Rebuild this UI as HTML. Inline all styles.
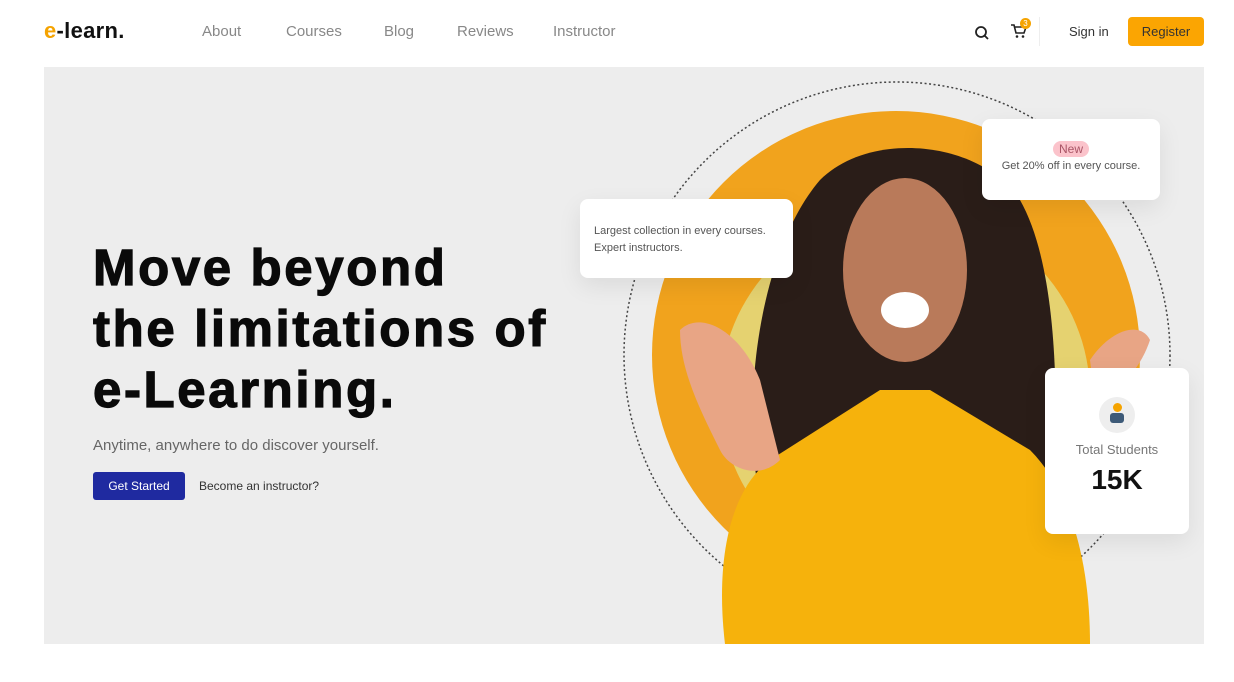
<!DOCTYPE html>
<html><head><meta charset="utf-8"><style>
*{margin:0;padding:0;box-sizing:border-box}
body{width:1234px;height:682px;background:#fff;font-family:"Liberation Sans",sans-serif;position:relative;overflow:hidden}
.a{position:absolute}
.nav{font-size:15px;color:#888;top:23px}
.hero{left:44px;top:67px;width:1160px;height:577px;background:#ededed;overflow:hidden}
h1{position:absolute;left:49px;top:170px;font-size:51px;line-height:61px;font-weight:900;color:#0a0a0a;letter-spacing:2.6px;-webkit-text-stroke:1.2px #0a0a0a}
.card{background:#fff;border-radius:8px;box-shadow:0 8px 24px rgba(0,0,0,.08)}
</style></head><body>
<div class="a" style="left:44px;top:18px;font-size:22px;font-weight:bold;color:#111;letter-spacing:0.3px"><span style="color:#f5a300">e</span>-learn.</div>
<div class="a nav" style="left:202px">About</div>
<div class="a nav" style="left:286px">Courses</div>
<div class="a nav" style="left:384px">Blog</div>
<div class="a nav" style="left:457px">Reviews</div>
<div class="a nav" style="left:553px">Instructor</div>
<svg class="a" style="left:973px;top:24px" width="18" height="18" viewBox="0 0 18 18"><circle cx="8" cy="8" r="5" fill="none" stroke="#222" stroke-width="1.8"/><path d="M11.5 11.5L15 15" stroke="#222" stroke-width="1.8"/></svg>
<svg class="a" style="left:1010px;top:22px" width="18" height="18" viewBox="0 0 18 18"><path d="M1 3h3l2 8h8l2-6H5" fill="none" stroke="#222" stroke-width="1.6"/><circle cx="7" cy="14.5" r="1.3" fill="#222"/><circle cx="13" cy="14.5" r="1.3" fill="#222"/></svg>
<div class="a" style="left:1020px;top:18px;width:11px;height:11px;border-radius:50%;background:#f5a300;color:#fff;font-size:8px;text-align:center;line-height:11px">3</div>
<div class="a" style="left:1039px;top:17px;width:1px;height:29px;background:#eee"></div>
<div class="a" style="left:1069px;top:24px;font-size:13px;color:#333">Sign in</div>
<div class="a" style="left:1128px;top:17px;width:76px;height:29px;background:#fba502;border-radius:4px;font-size:13px;color:#333;text-align:center;line-height:29px">Register</div>

<div class="a hero">
<h1>Move beyond<br>the limitations of<br>e-Learning.</h1>
<div class="a" style="left:49px;top:370px;font-size:15px;color:#666">Anytime, anywhere to do discover yourself.</div>
<div class="a" style="left:49px;top:405px;width:92px;height:28px;background:#1f2aa0;border-radius:3px;color:#fff;font-size:12px;text-align:center;line-height:28px">Get Started</div>
<div class="a" style="left:155px;top:412px;font-size:12px;color:#333">Become an instructor?</div>

<svg class="a" style="left:0;top:0" width="1160" height="577" viewBox="44 67 1160 577">
<circle cx="897" cy="355" r="273" fill="none" stroke="#444" stroke-width="1.5" stroke-dasharray="2 2.5"/>
<circle cx="896" cy="355" r="244" fill="#f1a31d"/>
<circle cx="905" cy="395" r="185" fill="#e5d270"/>
<path d="M760 500 C740 400 760 250 820 180 C870 130 980 140 1020 200 C1060 270 1060 420 1050 520 Z" fill="#2a1d18"/>
<ellipse cx="905" cy="270" rx="62" ry="92" fill="#b97a5a"/>
<ellipse cx="905" cy="310" rx="24" ry="18" fill="#fff"/>
<path d="M725 644 C715 560 730 490 770 460 L880 390 L930 390 L1030 450 C1070 490 1090 560 1090 644 Z" fill="#f6b20c"/>
<path d="M680 330 C700 310 740 330 760 380 L780 460 C760 480 730 470 720 450 C700 410 680 370 680 330Z" fill="#e8a585"/>
<path d="M1090 360 C1110 330 1140 320 1150 340 C1140 370 1120 390 1095 400Z" fill="#e8a585"/>
</svg>

<div class="a card" style="left:536px;top:132px;width:213px;height:79px;padding:24px 14px;font-size:11px;line-height:17px;color:#555">Largest collection in every courses.<br>Expert instructors.</div>
<div class="a card" style="left:938px;top:52px;width:178px;height:81px;text-align:center;font-size:11px;color:#555;padding-top:23px">
<span style="background:#fbc3cb;color:#a56;border-radius:9px;padding:1px 6px;font-size:12px">New</span><br><span style="line-height:20px">Get 20% off in every course.</span></div>
<div class="a card" style="left:1001px;top:301px;width:144px;height:166px;text-align:center">
<div style="margin:29px auto 0;width:36px;height:36px;border-radius:50%;background:#eee;position:relative">
<div class="a" style="left:14px;top:6px;width:9px;height:9px;border-radius:50%;background:#f5a300"></div>
<div class="a" style="left:11px;top:16px;width:14px;height:10px;border-radius:3px;background:#3d5a78"></div></div>
<div style="margin-top:9px;font-size:13px;color:#777">Total Students</div>
<div style="margin-top:7px;font-size:28px;font-weight:900;color:#111">15K</div>
</div>
</div>
</body></html>
